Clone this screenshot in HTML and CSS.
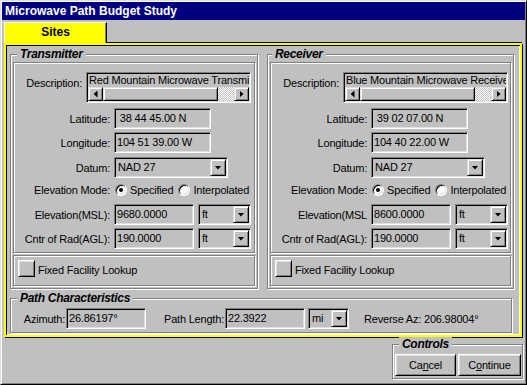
FILE: index.html
```html
<!DOCTYPE html>
<html>
<head>
<meta charset="utf-8">
<link rel="stylesheet" href="styles.css">
</head>
<body>
<div class="window">
  <div class="titlebar">Microwave Path Budget Study</div>
  <div class="tabs"><div class="tab">Sites</div></div>
  <div class="page">
    <div class="sites">
      <div class="group site">
        <span class="gtitle">Transmitter</span>
        <div class="panel">
          <div class="row desc-row">
            <span class="dlabel">Description:</span>
            <div class="desc">
              <div class="desc-text">Red Mountain Microwave Transmitter</div>
              <div class="hscroll">
                <span class="sbtn left"></span>
                <span class="thumb"></span>
                <span class="track"></span>
                <span class="sbtn right"></span>
              </div>
            </div>
          </div>
          <div class="row r-lat"><span class="label">Latitude:</span><div class="field w97">&nbsp;38 44 45.00 N</div></div>
          <div class="row r-lon"><span class="label">Longitude:</span><div class="field w97">104 51 39.00 W</div></div>
          <div class="row r-dat"><span class="label">Datum:</span><div class="combo w114"><span class="ctext">NAD 27</span><span class="dbtn"></span></div></div>
          <div class="row r-mode"><span class="label">Elevation Mode:</span><span class="radio on"></span><span class="rtext">Specified</span><span class="radio"></span><span class="rtext">Interpolated</span></div>
          <div class="row r-elev"><span class="label">Elevation(MSL):</span><div class="field w80">9680.0000</div><div class="combo w53"><span class="ctext">ft</span><span class="dbtn"></span></div></div>
          <div class="row r-cor"><span class="label">Cntr of Rad(AGL):</span><div class="field w80">190.0000</div><div class="combo w53"><span class="ctext">ft</span><span class="dbtn"></span></div></div>
        </div>
        <div class="panel2"><span class="chk"></span><span class="ctext2">Fixed Facility Lookup</span></div>
      </div>
      <div class="group site rx">
        <span class="gtitle">Receiver</span>
        <div class="panel">
          <div class="row desc-row">
            <span class="dlabel">Description:</span>
            <div class="desc">
              <div class="desc-text">Blue Mountain Microwave Receiver</div>
              <div class="hscroll">
                <span class="sbtn left"></span>
                <span class="thumb"></span>
                <span class="track"></span>
                <span class="sbtn right"></span>
              </div>
            </div>
          </div>
          <div class="row r-lat"><span class="label">Latitude:</span><div class="field w97">&nbsp;39 02 07.00 N</div></div>
          <div class="row r-lon"><span class="label">Longitude:</span><div class="field w97">104 40 22.00 W</div></div>
          <div class="row r-dat"><span class="label">Datum:</span><div class="combo w114"><span class="ctext">NAD 27</span><span class="dbtn"></span></div></div>
          <div class="row r-mode"><span class="label">Elevation Mode:</span><span class="radio on"></span><span class="rtext">Specified</span><span class="radio"></span><span class="rtext">Interpolated</span></div>
          <div class="row r-elev"><span class="label">Elevation(MSL</span><div class="field w80">8600.0000</div><div class="combo w53"><span class="ctext">ft</span><span class="dbtn"></span></div></div>
          <div class="row r-cor"><span class="label">Cntr of Rad(AGL):</span><div class="field w80">190.0000</div><div class="combo w53"><span class="ctext">ft</span><span class="dbtn"></span></div></div>
        </div>
        <div class="panel2"><span class="chk"></span><span class="ctext2">Fixed Facility Lookup</span></div>
      </div>
    </div>
    <div class="group path">
      <span class="gtitle">Path Characteristics</span>
      <div class="prow">
        <span class="plabel az">Azimuth:</span>
        <div class="field w80">26.86197°</div>
        <span class="plabel pl">Path Length:</span>
        <div class="field w80">22.3922</div>
        <div class="combo w41"><span class="ctext">mi</span><span class="dbtn"></span></div>
        <span class="revaz">Reverse Az: 206.98004°</span>
      </div>
    </div>
  </div>
  <div class="bottom">
    <div class="group controls">
      <span class="gtitle">Controls</span>
      <div class="btns">
        <button class="btn cancel">Ca<u>n</u>cel</button>
        <button class="btn cont">C<u>o</u>ntinue</button>
      </div>
    </div>
  </div>
</div>
</body>
</html>
```
FILE: styles.css
```css
* { box-sizing: border-box; }
body {
  margin: 0;
  background: #c0c0c0;
  font: 11px "Liberation Sans", Arial, sans-serif;
  letter-spacing: -0.2px;
  color: #000;
}
.window {
  width: 527px;
  height: 385px;
  border: 1px solid;
  border-color: #dfdfdf #000 #000 #dfdfdf;
  box-shadow: inset 1px 1px #fff, inset -1px -1px #808080;
  padding: 1px;
  display: flex;
  flex-direction: column;
  background: #c0c0c0;
}
.titlebar {
  height: 18px;
  background: #000080;
  color: #fff;
  font-weight: bold;
  font-size: 12px;
  letter-spacing: 0;
  line-height: 18px;
  padding-left: 3px;
}
.tabs {
  height: 23px;
  padding-left: 2px;
  display: flex;
  align-items: flex-end;
}
.tab {
  position: relative;
  z-index: 1;
  width: 103px;
  height: 21px;
  background: #ff0;
  border-top: 1px solid #fff;
  border-left: 1px solid #fff;
  border-right: 1px solid #000;
  box-shadow: inset -1px 0 #808080;
  font-weight: bold;
  font-size: 12px;
  letter-spacing: 0;
  line-height: 18px;
  text-align: center;
}
.page {
  margin-left: 2px;
  width: 518px;
  height: 294px;
  border: 2px solid #ff0;
  box-shadow: 0 -1px #000, 1px 1px #000, inset 1px 1px #000, inset -1px -1px #fff;
  padding: 9px 0 0 4px;
}
.sites {
  display: flex;
  gap: 9px;
}
.group {
  position: relative;
  border: 1px solid #808080;
  box-shadow: inset 1px 1px #fff, 1px 1px #fff;
}
.gtitle {
  position: absolute;
  top: -8px;
  left: 6px;
  padding: 0 3px;
  background: #c0c0c0;
  font-weight: bold;
  font-style: italic;
  font-size: 12px;
  letter-spacing: -0.3px;
  line-height: 14px;
}
.site {
  width: 248px;
  height: 235px;
  padding: 7px 2px 0 2px;
}
.site.rx { width: 247px; }
.site.rx .gtitle { left: 4px; }
.panel, .panel2 {
  border: 1px solid #808080;
  box-shadow: inset 1px 1px #fff, 1px 1px #fff;
}
.panel {
  height: 191px;
  display: flex;
  flex-direction: column;
}
.panel2 {
  margin-top: 2px;
  height: 31px;
  display: flex;
  align-items: flex-start;
  padding: 4px 0 0 4px;
}
.chk {
  width: 17px;
  height: 17px;
  border: 1px solid;
  border-color: #fff #000 #000 #fff;
  box-shadow: inset 1px 1px #dfdfdf, inset -1px -1px #808080;
}
.ctext2 {
  margin-left: 3px;
  line-height: 17px;
  padding-top: 2px;
}
.row {
  display: flex;
  align-items: center;
  height: 21px;
}
.desc-row { margin-top: 9px; height: 31px; align-items: flex-start; }
.r-lat { margin-top: 5px; }
.r-lon { margin-top: 3px; }
.r-dat { margin-top: 4px; }
.r-mode { margin-top: 3px; height: 18px; }
.r-elev { margin-top: 5px; }
.r-cor { margin-top: 3px; }
.dlabel {
  width: 68px;
  text-align: right;
  line-height: 13px;
  padding-top: 5px;
}
.label {
  width: 96px;
  text-align: right;
  white-space: nowrap;
}
.desc {
  margin-left: 4px;
  width: 165px;
  height: 31px;
  border: 1px solid;
  border-color: #808080 #fff #fff #808080;
  box-shadow: inset 1px 1px #000, inset -1px -1px #dfdfdf;
  padding: 1px;
  display: flex;
  flex-direction: column;
}
.desc-text {
  height: 13px;
  line-height: 13px;
  padding-left: 1px;
  white-space: nowrap;
  overflow: hidden;
}
.hscroll {
  height: 14px;
  display: flex;
}
.sbtn {
  width: 15px;
  height: 14px;
  border: 1px solid;
  border-color: #dfdfdf #000 #000 #dfdfdf;
  box-shadow: inset 1px 1px #fff, inset -1px -1px #808080;
  display: flex;
  align-items: center;
  justify-content: center;
}
.sbtn::after {
  content: "";
  width: 4px;
  height: 7px;
  background: #000;
}
.sbtn.left::after { clip-path: polygon(100% 0, 100% 100%, 0 50%); }
.sbtn.right::after { clip-path: polygon(0 0, 100% 50%, 0 100%); }
.thumb {
  width: 115px;
  height: 14px;
  border: 1px solid;
  border-color: #dfdfdf #000 #000 #dfdfdf;
  box-shadow: inset 1px 1px #fff, inset -1px -1px #808080;
}
.track {
  flex: 1;
  background: repeating-conic-gradient(#fff 0 25%, #c0c0c0 0 50%) 0 0 / 2px 2px;
}
.field, .combo {
  height: 21px;
  border: 1px solid;
  border-color: #808080 #fff #fff #808080;
  box-shadow: inset 1px 1px #000, inset -1px -1px #dfdfdf;
  line-height: 19px;
  white-space: nowrap;
  overflow: hidden;
}
.field { padding-left: 2px; margin-left: 4px; }
.combo {
  margin-left: 4px;
  padding: 1px;
  display: flex;
}
.ctext {
  flex: 1;
  line-height: 17px;
  padding-left: 2px;
}
.dbtn {
  width: 16px;
  height: 17px;
  border: 1px solid;
  border-color: #dfdfdf #000 #000 #dfdfdf;
  box-shadow: inset 1px 1px #fff, inset -1px -1px #808080;
  display: flex;
  align-items: center;
  justify-content: center;
}
.dbtn::after {
  content: "";
  width: 7px;
  height: 4px;
  background: #000;
  clip-path: polygon(0 0, 100% 0, 50% 100%);
}
.w97 { width: 97px; }
.w114 { width: 114px; }
.w80 { width: 80px; }
.w53 { width: 53px; }
.w41 { width: 41px; }
.radio {
  width: 12px;
  height: 12px;
  border-radius: 50%;
  border: 1px solid;
  border-color: #808080 #fff #fff #808080;
  box-shadow: inset 1px 1px #000, inset -1px -1px #dfdfdf;
  background: #fff;
  display: flex;
  align-items: center;
  justify-content: center;
  margin-left: 5px;
}
.label + .radio { margin-left: 5px; }
.radio.on::after {
  content: "";
  width: 4px;
  height: 4px;
  border-radius: 50%;
  background: #000;
}
.rtext { margin-left: 3px; }
.path {
  margin-top: 9px;
  width: 502px;
  height: 35px;
}
.prow {
  margin-top: 9px;
  display: flex;
  align-items: center;
  height: 21px;
}
.plabel { text-align: right; }
.az { width: 54px; }
.pl { width: 78px; }
.revaz { margin-left: 15px; }
.path .field { margin-left: 1px; }
.path .combo { margin-left: 3px; }
.bottom {
  margin-top: 7px;
  display: flex;
  justify-content: flex-end;
  padding-right: 2px;
}
.controls {
  width: 131px;
  height: 35px;
}
.btns {
  display: flex;
  gap: 2px;
  padding: 9px 0 0 2px;
}
.btn {
  height: 22px;
  font: 11px "Liberation Sans", Arial, sans-serif;
  letter-spacing: -0.2px;
  color: #000;
  background: #c0c0c0;
  border: 1px solid;
  border-color: #fff #000 #000 #fff;
  box-shadow: inset 1px 1px #dfdfdf, inset -1px -1px #808080;
  padding: 0;
}
.cancel { width: 61px; }
.cont { width: 63px; }
```
